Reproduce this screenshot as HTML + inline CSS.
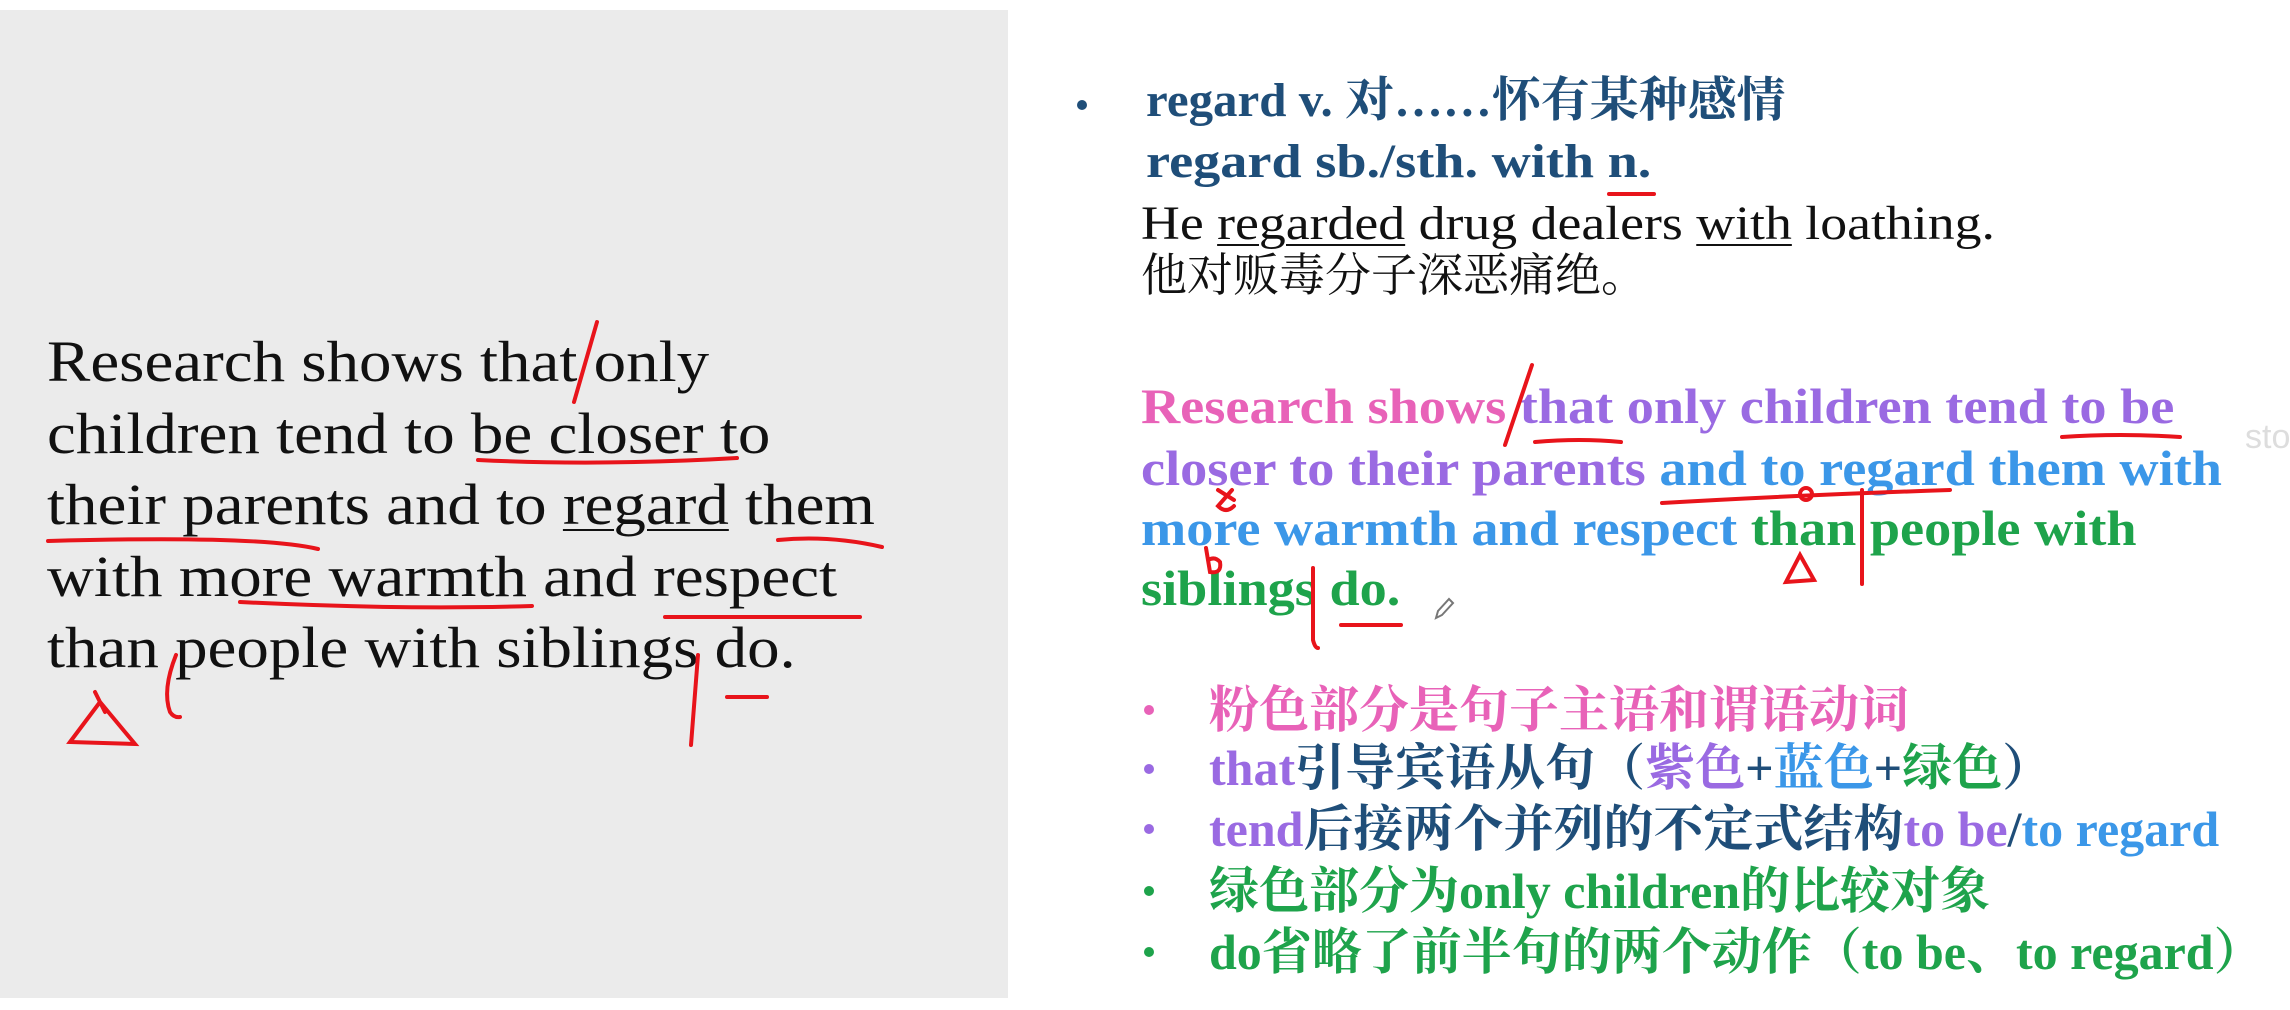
<!DOCTYPE html>
<html><head><meta charset="utf-8"><style>
html,body{margin:0;padding:0;width:2290px;height:1010px;overflow:hidden;background:#fff;position:relative}
.l{position:absolute;white-space:nowrap;line-height:1;transform-origin:0 50%}
.left{background:#ebebeb;position:absolute;left:0;top:10px;width:1008px;height:988px}
.lt{font-family:"Liberation Serif","Noto Serif CJK SC",serif;font-size:58px;color:#111;left:47px;transform:scaleX(1.12)}
.rt{font-family:"Liberation Serif","Noto Serif CJK SC",serif;font-weight:bold}
.h{color:#1f4e79;font-size:48px;left:1146px}
.pk{color:#e862b8}.pu{color:#9a6ae2}.bl{color:#3b97e8}.gr{color:#1ea34b}.db{color:#1f4e79}
.p{font-size:50px;left:1141px;transform:scaleX(1.085)}
.li{font-size:50px;left:1209px}
.dot{position:absolute;width:10px;height:10px;border-radius:50%}
u{text-decoration-thickness:2px;text-underline-offset:5px}
</style></head><body>
<div class="left"></div>
<div class="l lt" style="top:333px">Research shows that only</div>
<div class="l lt" style="top:405px">children tend to be closer to</div>
<div class="l lt" style="top:476px">their parents and to <u>regard</u> them</div>
<div class="l lt" style="top:548px">with more warmth and respect</div>
<div class="l lt" style="top:619px">than people with siblings do.</div>

<div class="dot" style="left:1077px;top:100px;background:#1f4e79"></div>
<div class="l rt h" style="top:77px;transform:scaleX(1.02)">regard v. 对……怀有某种感情</div>
<div class="l rt h" style="top:138px;transform:scaleX(1.13)">regard sb./sth. with n.</div>
<div class="l" style="top:200px;left:1141px;font-family:'Liberation Serif',serif;font-size:48px;color:#111;transform:scaleX(1.12)">He <u>regarded</u> drug dealers <u>with</u> loathing.</div>
<div class="l" style="top:253px;left:1141px;font-family:'Liberation Serif','Noto Serif CJK SC',serif;font-size:46px;color:#111">他对贩毒分子深恶痛绝。</div>

<div class="l rt p" style="top:381px"><span class="pk">Research shows </span><span class="pu">that only children tend to be</span></div>
<div class="l rt p" style="top:443px"><span class="pu">closer to their parents </span><span class="bl">and to regard them with</span></div>
<div class="l rt p" style="top:503px"><span class="bl">more warmth and respect </span><span class="gr">than people with</span></div>
<div class="l rt p" style="top:563px"><span class="gr">siblings do.</span></div>

<div class="dot" style="left:1144px;top:705px;background:#e862b8"></div>
<div class="dot" style="left:1144px;top:764px;background:#9a6ae2"></div>
<div class="dot" style="left:1144px;top:824px;background:#9a6ae2"></div>
<div class="dot" style="left:1144px;top:886px;background:#1ea34b"></div>
<div class="dot" style="left:1144px;top:947px;background:#1ea34b"></div>
<div class="l rt li pk" style="top:685px">粉色部分是句子主语和谓语动词</div>
<div class="l rt li" style="top:743px"><span class="pu">that</span><span class="db">引导宾语从句（</span><span class="pu">紫色</span><span class="db">+</span><span class="bl">蓝色</span><span class="db">+</span><span class="gr">绿色</span><span class="db">）</span></div>
<div class="l rt li" style="top:804px"><span class="pu">tend</span><span class="db">后接两个并列的不定式结构</span><span class="pu">to be</span><span class="db">/</span><span class="bl">to regard</span></div>
<div class="l rt li gr" style="top:866px">绿色部分为only children的比较对象</div>
<div class="l rt li gr" style="top:927px">do省略了前半句的两个动作（to be、to regard）</div>
<div class="l" style="top:420px;left:2245px;font-family:'Liberation Sans',sans-serif;font-size:34px;color:#ddd">sto</div>

<svg style="position:absolute;left:0;top:0" width="2290" height="1010" fill="none" stroke="#e8141b" stroke-width="4" stroke-linecap="round">
<path d="M597 322 L574 402"/>
<path d="M478 460 Q600 466 737 458"/>
<path d="M48 541 Q260 535 318 549"/>
<path d="M778 540 Q830 535 882 547"/>
<path d="M240 602 Q400 610 532 606"/>
<path d="M665 617 L860 617"/>
<path d="M176 655 Q162 690 170 712 Q174 718 180 717"/>
<path d="M698 655 L691 745"/>
<path d="M727 697 L767 697"/>
<path d="M70 742 L100 702 L135 744 Z M95 692 L105 712"/>
<path d="M1532 365 L1505 445"/>
<path d="M1535 442 Q1580 438 1621 442"/>
<path d="M2062 437 Q2120 433 2180 437"/>
<path d="M1662 503 Q1800 495 1950 490"/>
<circle cx="1806" cy="494" r="6"/>
<path d="M1862 490 L1862 584"/>
<path d="M1800 555 L1786 582 L1814 580 Z"/>
<path d="M1218 490 L1234 500 M1232 490 L1218 506 Q1226 514 1234 506"/>
<path d="M1206 548 L1210 572 Q1222 574 1220 562 Q1215 556 1208 560"/>
<path d="M1313 568 L1313 640 Q1315 648 1318 648"/>
<path d="M1341 625 L1401 625"/>
<path d="M1609 194 L1654 194"/>
</svg>
<svg style="position:absolute;left:1432px;top:596px" width="24" height="26" fill="none" stroke="#777" stroke-width="2"><path d="M4 22 L6 15 L17 3 L21 7 L10 19 Z"/></svg>
</body></html>
